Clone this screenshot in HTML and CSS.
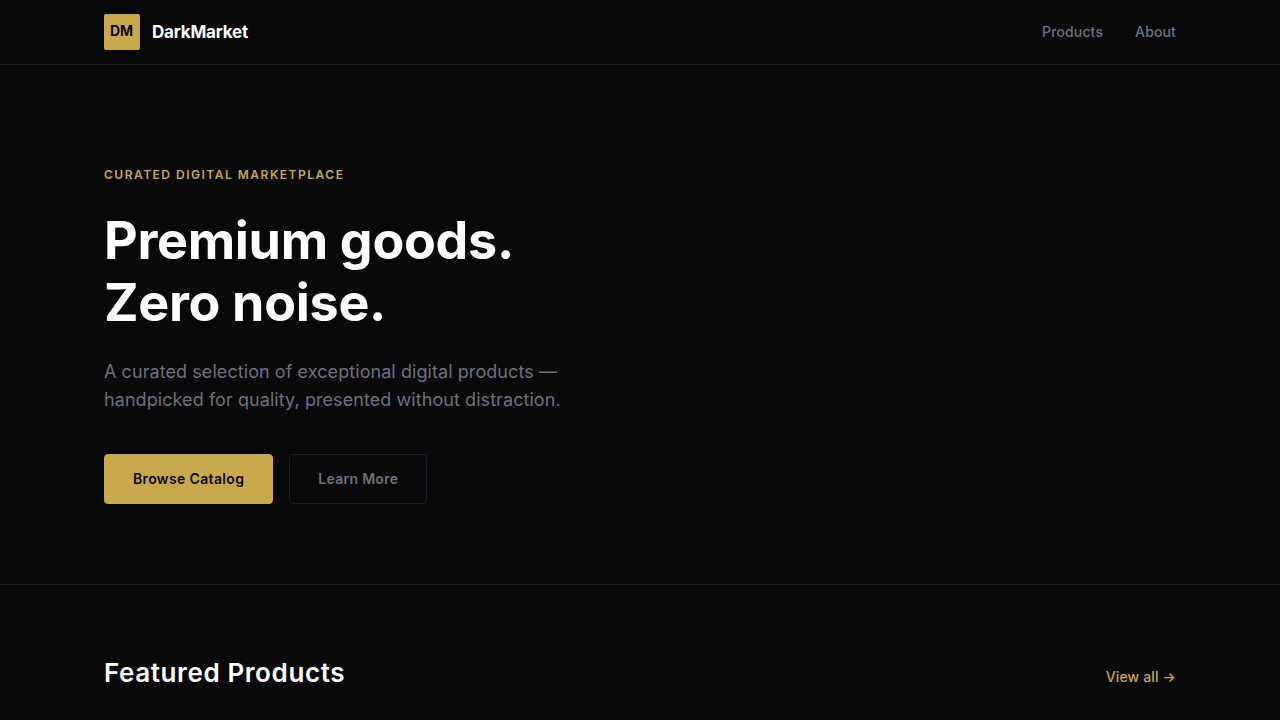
FILE: index.html
```html
<!DOCTYPE html>
<html lang="en">
<head>
    <meta charset="UTF-8">
    <meta name="viewport" content="width=device-width, initial-scale=1.0">
    <title>DarkMarket</title>
    <link rel="stylesheet" href="styles.css">
</head>
<body>
    <header class="site-header">
        <div class="wrap nav">
            <a class="brand" href="#">
                <span class="brand-mark">DM</span>
                <span class="brand-name">DarkMarket</span>
            </a>
            <nav class="nav-links">
                <a href="#">Products</a>
                <a href="#">About</a>
            </nav>
        </div>
    </header>

    <section class="hero">
        <div class="wrap">
            <p class="eyebrow">Curated Digital Marketplace</p>
            <h1>Premium goods.<br>Zero noise.</h1>
            <p class="lead">A curated selection of exceptional digital products — handpicked for quality, presented without distraction.</p>
            <div class="actions">
                <a class="btn btn-gold" href="#">Browse Catalog</a>
                <a class="btn btn-ghost" href="#">Learn More</a>
            </div>
        </div>
    </section>

    <section class="featured">
        <div class="wrap section-head">
            <h2>Featured Products</h2>
            <a class="view-all" href="#">View all →</a>
        </div>
    </section>
</body>
</html>
```

FILE: styles.css
```css
* {
    box-sizing: border-box;
}

html, body {
    height: 720px;
    overflow: hidden;
}

body {
    margin: 0;
    background-color: #09090b;
    color: #fff;
    font-family: "Inter", "Liberation Sans", sans-serif;
}

a {
    color: inherit;
    text-decoration: none;
}

.wrap {
    max-width: 1072px;
    margin: 0 auto;
}

/* Header */
.site-header {
    height: 65px;
    border-bottom: 1px solid #1e1e22;
}

.nav {
    height: 64px;
    display: flex;
    align-items: center;
    justify-content: space-between;
}

.brand {
    display: flex;
    align-items: center;
    gap: 12px;
}

.brand-mark {
    width: 36px;
    height: 36px;
    display: flex;
    align-items: center;
    justify-content: center;
    padding: 0 1px 3px 0;
    background-color: #c9a84c;
    border-radius: 2px;
    color: #0a0a0c;
    font-size: 14px;
    font-weight: 700;
}

.brand-name {
    font-size: 17px;
    font-weight: 700;
    letter-spacing: -0.2px;
}

.nav-links {
    display: flex;
    gap: 32px;
    padding-bottom: 2px;
    font-size: 14px;
    font-weight: 500;
    letter-spacing: 0.14px;
    color: #6b7280;
}

/* Hero */
.hero {
    height: 520px;
    padding-top: 102px;
    border-bottom: 1px solid #1e1e22;
}

.eyebrow {
    margin: 0 0 27px;
    font-size: 12px;
    line-height: 16px;
    font-weight: 600;
    letter-spacing: 1.5px;
    text-transform: uppercase;
    color: #c9a84c;
}

h1 {
    margin: 0 0 25px;
    font-size: 52px;
    line-height: 61.6px;
    font-weight: 700;
    letter-spacing: -0.3px;
}

.lead {
    margin: 0 0 40px;
    max-width: 480px;
    font-size: 18px;
    line-height: 28px;
    letter-spacing: 0.07px;
    color: #6b7280;
}

.actions {
    display: flex;
    gap: 16px;
}

.btn {
    height: 50px;
    display: flex;
    align-items: center;
    padding: 0 28px 2px;
    border: 1px solid #1e1e22;
    border-radius: 4px;
    font-size: 14px;
    font-weight: 600;
    letter-spacing: 0.35px;
}

.btn-gold {
    border-color: #c9a84c;
    background-color: #c9a84c;
    color: #0a0a0c;
}

.btn-ghost {
    letter-spacing: 0.28px;
    color: #6b7280;
}

/* Featured */
.featured {
    padding-top: 72px;
}

.section-head {
    display: flex;
    align-items: flex-end;
    justify-content: space-between;
}

h2 {
    margin: 0;
    font-size: 26px;
    line-height: 32px;
    font-weight: 600;
    letter-spacing: 0.6px;
}

.view-all {
    margin-bottom: 4px;
    font-size: 14px;
    font-weight: 500;
    letter-spacing: 0.14px;
    color: #c9a84c;
}
```
